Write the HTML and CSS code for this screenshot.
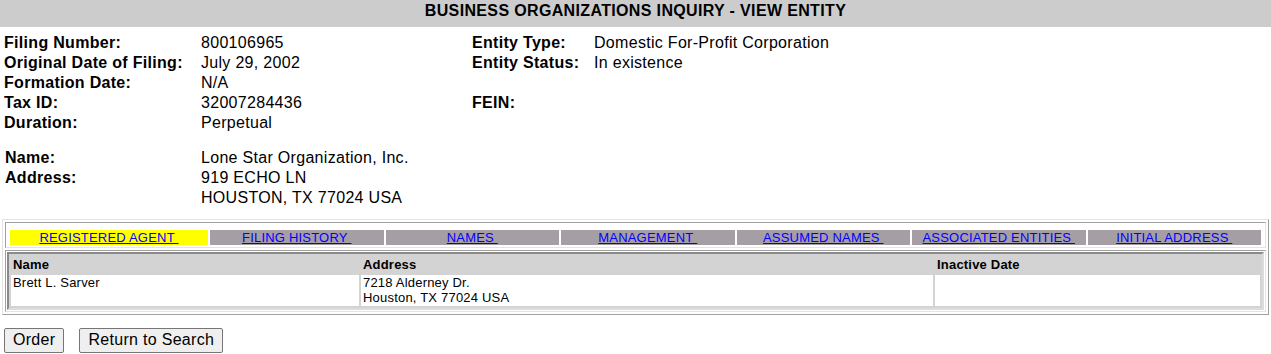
FILE: index.html
```html
<!DOCTYPE html>
<html lang="en">
<head>
    <meta charset="UTF-8">
    <title>Business Organizations Inquiry - View Entity</title>
    <link rel="stylesheet" href="styles.css">
</head>
<body>
    <div class="page-title">BUSINESS ORGANIZATIONS INQUIRY - VIEW ENTITY</div>

    <div class="content">
        <div class="summary">
            <dl class="facts facts-left">
                <dt>Filing Number:</dt><dd>800106965</dd>
                <dt>Original Date of Filing:</dt><dd>July 29, 2002</dd>
                <dt>Formation Date:</dt><dd>N/A</dd>
                <dt>Tax ID:</dt><dd>32007284436</dd>
                <dt>Duration:</dt><dd>Perpetual</dd>
            </dl>
            <dl class="facts facts-right">
                <dt>Entity Type:</dt><dd>Domestic For-Profit Corporation</dd>
                <dt>Entity Status:</dt><dd>In existence</dd>
                <dt></dt><dd></dd>
                <dt>FEIN:</dt><dd></dd>
            </dl>
        </div>

        <dl class="facts party">
            <dt>Name:</dt><dd>Lone Star Organization, Inc.</dd>
            <dt>Address:</dt><dd>919 ECHO LN<br>HOUSTON, TX 77024 USA</dd>
        </dl>

        <div class="panel">
            <div class="panel-cell">
                <div class="tabs">
                    <div class="tab tab-active"><a href="#">REGISTERED AGENT&nbsp;</a></div>
                    <div class="tab"><a href="#">FILING HISTORY&nbsp;</a></div>
                    <div class="tab"><a href="#">NAMES&nbsp;</a></div>
                    <div class="tab"><a href="#">MANAGEMENT&nbsp;</a></div>
                    <div class="tab"><a href="#">ASSUMED NAMES&nbsp;</a></div>
                    <div class="tab"><a href="#">ASSOCIATED ENTITIES&nbsp;</a></div>
                    <div class="tab"><a href="#">INITIAL ADDRESS&nbsp;</a></div>
                </div>
            </div>
            <div class="panel-cell">
                <table class="detail">
                    <colgroup>
                        <col class="col-name">
                        <col class="col-address">
                        <col>
                    </colgroup>
                    <tr>
                        <th>Name</th>
                        <th>Address</th>
                        <th>Inactive Date</th>
                    </tr>
                    <tr>
                        <td>Brett L. Sarver</td>
                        <td>7218 Alderney Dr.<br>Houston, TX 77024 USA</td>
                        <td></td>
                    </tr>
                </table>
            </div>
        </div>

        <div class="actions">
            <button type="button">Order</button>
            <button type="button">Return to Search</button>
        </div>
    </div>
</body>
</html>
```

FILE: styles.css
```css
body {
    margin: 0;
    font-family: "Liberation Sans", Arial, sans-serif;
    font-size: 16px;
    line-height: 20px;
    letter-spacing: 0.3px;
    color: #000;
    background-color: #fff;
}
.page-title {
    background-color: #cccccc;
    font-weight: bold;
    text-align: center;
    height: 27px;
    line-height: 22px;
    letter-spacing: 0.35px;
}
.content {
    padding: 6px 4px 0;
}
.summary {
    display: grid;
    grid-template-columns: 468px 1fr;
}
.facts {
    display: grid;
    margin: 0;
}
.facts dt {
    font-weight: bold;
    min-height: 20px;
}
.facts dd {
    margin: 0;
}
.facts-left {
    grid-template-columns: 197px 1fr;
}
.facts-right {
    grid-template-columns: 122px 1fr;
    align-content: start;
}
.party {
    grid-template-columns: 196px 1fr;
    margin-top: 15px;
    padding-left: 1px;
}
.panel {
    margin: 11px -2px 0;
    border: 1px solid;
    border-color: #e4e4e4 #a0a0a0 #a0a0a0 #e4e4e4;
    padding: 2px;
}
.panel-cell {
    border: 1px solid;
    border-color: #a0a0a0 #e4e4e4 #e4e4e4 #a0a0a0;
    padding: 1px;
}
.panel-cell + .panel-cell {
    margin-top: 2px;
}
.tabs {
    display: grid;
    grid-template-columns: 198px repeat(6, 1fr);
    gap: 2px;
    padding: 6px 3px 1px;
}
.tab {
    background-color: #a69ea5;
    text-align: center;
    font-size: 13px;
    line-height: 15px;
    letter-spacing: 0.2px;
}
.tab-active {
    background-color: #ffff00;
}
.tab a {
    color: #0000ff;
}
.detail {
    width: 100%;
    table-layout: fixed;
    border-collapse: separate;
    border-spacing: 2px;
    border: 2px solid;
    border-color: #8a8a8a #dcdcdc #dcdcdc #8a8a8a;
    background-color: #d3d3d3;
    font-size: 13px;
    line-height: 15px;
    letter-spacing: 0.2px;
}
.col-name {
    width: 348px;
}
.col-address {
    width: 572px;
}
.detail th {
    text-align: left;
    padding: 1px 2px;
}
.detail td {
    background-color: #fff;
    vertical-align: top;
    padding: 0 2px 1px;
    height: 30px;
}
.actions {
    display: flex;
    gap: 15px;
    margin-top: 13px;
}
.actions button {
    font-family: "Liberation Sans", Arial, sans-serif;
    font-size: 16px;
    line-height: 20px;
    letter-spacing: 0.3px;
    padding: 1px 8px 2px;
    background-color: #efefef;
    border: 1px solid #767676;
    border-radius: 2px;
    color: #000;
}
```
